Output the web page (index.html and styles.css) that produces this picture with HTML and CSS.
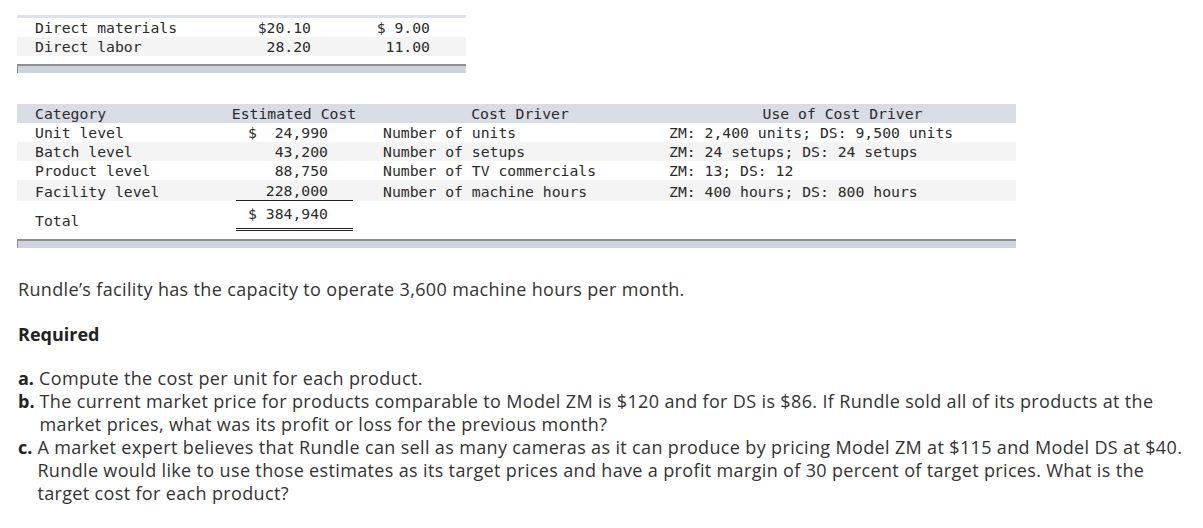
FILE: index.html
```html
<!DOCTYPE html>
<html>
<head>
<meta charset="utf-8">
<link rel="stylesheet" href="styles.css">
</head>
<body>
<div class="page">
  <table class="t1">
    <tr class="r-white">
      <td class="c-label">Direct materials</td>
      <td class="c-num1">$20.10</td>
      <td class="c-num2">$ 9.00</td>
      <td class="c-fill"></td>
    </tr>
    <tr class="r-gray">
      <td class="c-label">Direct labor</td>
      <td class="c-num1">28.20</td>
      <td class="c-num2">11.00</td>
      <td class="c-fill"></td>
    </tr>
  </table>
  <div class="bar bar-1"></div>

  <table class="t2">
    <tr class="hdr">
      <td class="k-cat">Category</td>
      <td class="k-cost k-cost-h">Estimated Cost</td>
      <td class="k-drv k-drv-h">Cost Driver</td>
      <td class="k-use k-use-h">Use of Cost Driver</td>
    </tr>
    <tr class="r-white">
      <td class="k-cat">Unit level</td>
      <td class="k-cost"><span class="amt">$&nbsp;&nbsp;24,990</span></td>
      <td class="k-drv">Number of units</td>
      <td class="k-use">ZM: 2,400 units; DS: 9,500 units</td>
    </tr>
    <tr class="r-gray">
      <td class="k-cat">Batch level</td>
      <td class="k-cost"><span class="amt">43,200</span></td>
      <td class="k-drv">Number of setups</td>
      <td class="k-use">ZM: 24 setups; DS: 24 setups</td>
    </tr>
    <tr class="r-white">
      <td class="k-cat">Product level</td>
      <td class="k-cost"><span class="amt">88,750</span></td>
      <td class="k-drv">Number of TV commercials</td>
      <td class="k-use">ZM: 13; DS: 12</td>
    </tr>
    <tr class="r-gray r-fac">
      <td class="k-cat">Facility level</td>
      <td class="k-cost"><span class="amt amt-under">228,000</span></td>
      <td class="k-drv">Number of machine hours</td>
      <td class="k-use">ZM: 400 hours; DS: 800 hours</td>
    </tr>
    <tr class="r-white r-total">
      <td class="k-cat k-bottom">Total</td>
      <td class="k-cost"><span class="amt amt-total">$ 384,940</span></td>
      <td class="k-drv"></td>
      <td class="k-use"></td>
    </tr>
  </table>
  <div class="bar bar-2"></div>

  <p class="intro">Rundle’s facility has the capacity to operate 3,600 machine hours per month.</p>
  <h3 class="req">Required</h3>
  <ul class="tasks">
    <li><b>a.</b> <span>Compute the cost per unit for each product.</span></li>
    <li><b>b.</b> <span>The current market price for products comparable to Model ZM is $120 and for DS is $86. If Rundle sold all of its products at the<br>market prices, what was its profit or loss for the previous month?</span></li>
    <li><b>c.</b> <span>A market expert believes that Rundle can sell as many cameras as it can produce by pricing Model ZM at $115 and Model DS at $40.<br>Rundle would like to use those estimates as its target prices and have a profit margin of 30 percent of target prices. What is the<br>target cost for each product?</span></li>
  </ul>
</div>
</body>
</html>
```
FILE: styles.css
```css
html, body {
  margin: 0;
  padding: 0;
  background: #ffffff;
}
.page {
  padding: 15px 0 0 17px;
  color: #333333;
}
table {
  border-collapse: collapse;
  font-family: "DejaVu Sans Mono", "Liberation Mono", monospace;
  font-size: 14.75px;
  color: #2b2b2b;
}
td {
  padding: 0;
  height: 19px;
  line-height: 19px;
  white-space: pre;
  vertical-align: middle;
}
.r-white { background: #ffffff; }
.r-gray { background: #f4f4f4; }

/* table 1 */
.t1 {
  width: 449px;
  border-top: 3px solid #dde1e9;
}
.t1 .c-label { width: 182px; padding-left: 18px; }
.t1 .c-num1 { width: 94px; padding-right: 16px; text-align: right; }
.t1 .c-num2 { width: 103px; padding-right: 16px; text-align: right; }
.t1 .c-fill { width: 20px; }

.bar {
  height: 7px;
  background: #ced4df;
  border-top: 2px solid #8e9096;
  border-left: 1px solid #8e9096;
  box-sizing: content-box;
}
.bar-1 { width: 448px; margin-top: 8px; }
.bar-2 { width: 998px; margin-top: 8px; }

/* table 2 */
.t2 {
  width: 999px;
  margin-top: 31px;
}
.t2 .hdr { background: #d8dce5; }
.t2 .k-cat { width: 193px; padding-left: 18px; }
.t2 .k-cost { width: 132px; text-align: right; }
.t2 .k-cost-h { text-align: center; }
.t2 .k-drv { width: 268px; padding-left: 23px; }
.t2 .k-drv-h { padding-left: 29px; width: 262px; text-align: center; }
.t2 .k-use { width: 347px; padding-left: 18px; }
.t2 .k-use-h { text-align: center; }

.amt {
  display: block;
  margin: 0 7px 0 8px;
  padding-right: 25px;
  line-height: 19px;
}
.r-fac td { height: 20px; padding-top: 1px; line-height: 19px; }
.r-fac .k-cost { padding-top: 0; vertical-align: bottom; }
.amt-under {
  border-bottom: 1px solid #222;
  padding-top: 0;
}
.amt-total {
  padding-top: 2px;
  padding-bottom: 5px;
  border-bottom: 3px double #222;
}
.r-total td { height: 29px; }
.k-bottom { vertical-align: bottom; padding-bottom: 1px; }

/* text */
.intro, .req, .tasks {
  font-family: "Open Sans", Lato, sans-serif;
  color: #333333;
  font-size: 18px;
  line-height: 23px;
  letter-spacing: 0.35px;
}
.intro {
  margin: 30px 0 0 1px;
}
.req {
  margin: 22px 0 0 1px;
  font-weight: 700;
  color: #222;
  letter-spacing: 0;
}
.tasks {
  list-style: none;
  margin: 21px 0 0 0;
  padding: 0 0 0 1px;
}
.tasks li {
  display: flex;
  gap: 5px;
}
.tasks li b {
  flex: none;
  color: #222;
  letter-spacing: 0;
}
.tasks li span {
  flex: 1;
  white-space: nowrap;
}
```
